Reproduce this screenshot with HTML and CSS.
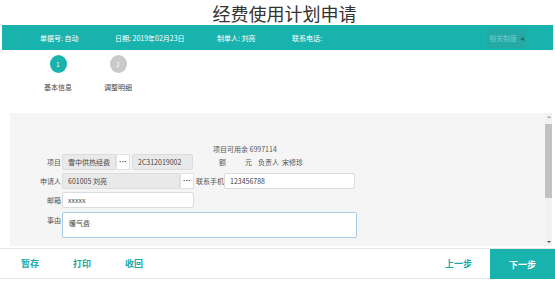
FILE: index.html
```html
<!DOCTYPE html>
<html lang="zh-CN">
  <head>
    <meta charset="UTF-8" />
    <title>经费使用计划申请</title>
    <link rel="stylesheet" href="styles.css">
  </head>
  <body>
    <h1 class="title">经费使用计划申请</h1>

    <div class="head-bar">
      <span class="head-item w1">单据号: 自动</span>
      <span class="head-item w2">日期: 2019年02月23日</span>
      <span class="head-item w3">制单人: 刘亮</span>
      <span class="head-item">联系电话:</span>
      <span class="rules-btn">相关制度 <span class="arrow">&#9666;</span></span>
    </div>

    <div class="steps">
      <div class="step active">
        <span class="dot">1</span>
        <span class="step-label">基本信息</span>
      </div>
      <div class="step">
        <span class="dot">2</span>
        <span class="step-label">调整明细</span>
      </div>
    </div>

    <div class="panel">
      <div class="panel-body">
        <div class="row row-top">
          <div class="field">
            <label class="lbl">项目</label>
            <input type="text" class="inp gray w-proj" value="雪中供热经费" readonly />
            <button class="dots">&middot;&middot;&middot;</button>
            <input type="text" class="inp gray w-code" value="2C312019002" readonly />
          </div>
          <div class="info">
            <div>项目可用余 6997114</div>
            <div class="info-line">
              <span class="i-e">额</span><span class="i-y">元</span><span class="i-f">负责人</span><span>宋修珍</span>
            </div>
          </div>
        </div>

        <div class="row">
          <div class="field">
            <label class="lbl">申请人</label>
            <input type="text" class="inp gray w-user" value="601005 刘亮" readonly />
            <button class="dots">&middot;&middot;&middot;</button>
          </div>
          <label class="lbl-phone">联系手机</label>
          <input type="text" class="inp w-phone" value="123456788" />
        </div>

        <div class="row">
          <div class="field">
            <label class="lbl">邮箱</label>
            <input type="text" class="inp w-mail" value="xxxxx" />
          </div>
        </div>

        <div class="row row-area">
          <label class="lbl">事由</label>
          <textarea class="area">暖气费</textarea>
        </div>
      </div>

      <div class="scrollbar">
        <span class="sb-up"></span>
        <span class="sb-thumb"></span>
        <span class="sb-down"></span>
      </div>
    </div>

    <div class="foot">
      <a class="foot-link">暂存</a>
      <a class="foot-link">打印</a>
      <a class="foot-link">收回</a>
      <a class="foot-link prev">上一步</a>
      <a class="next-btn">下一步</a>
    </div>
  </body>
</html>
```

FILE: styles.css
```css
body {
  margin: 0;
  width: 555px;
  height: 281px;
  overflow: hidden;
  background: #fff;
  font-family: "Noto Sans CJK SC", "DejaVu Sans", sans-serif;
  color: #555;
}
.title {
  margin: 0;
  height: 25px;
  line-height: 26px;
  text-align: center;
  font-size: 18px;
  font-weight: 400;
  color: #333;
  padding-left: 14px;
}
.head-bar {
  margin: 0 2px;
  height: 25px;
  background-color: #19b3ae;
  display: flex;
  align-items: center;
  padding-left: 38px;
  color: #fff;
  font-size: 7px;
}
.head-item.w1 {
  width: 75px;
}
.head-item.w2 {
  width: 102px;
}
.head-item.w3 {
  width: 75px;
}
.rules-btn {
  margin-left: auto;
  margin-right: 27px;
  width: 39px;
  height: 20px;
  background-color: #23aaa5;
  color: #7cc9c5;
  font-size: 7px;
  display: flex;
  align-items: center;
  justify-content: center;
  gap: 3px;
}
.rules-btn .arrow {
  color: #2a6f6c;
  font-size: 8px;
}
.steps {
  height: 63px;
  display: flex;
  padding-left: 44px;
  padding-top: 5px;
  box-sizing: border-box;
  gap: 32px;
}
.step {
  width: 28px;
  display: flex;
  flex-direction: column;
  align-items: center;
}
.dot {
  width: 17px;
  height: 18px;
  border-radius: 50%;
  background-color: #c9c9c9;
  color: #fff;
  font-size: 6px;
  display: flex;
  align-items: center;
  justify-content: center;
}
.step.active .dot {
  background-color: #19b3ae;
}
.step-label {
  margin-top: 9px;
  font-size: 7px;
  color: #444;
  white-space: nowrap;
}
.panel {
  margin-left: 10px;
  width: 542px;
  height: 133px;
  display: flex;
  background-color: #f5f5f5;
}
.panel-body {
  flex: 1;
  padding-top: 30px;
  display: flex;
  flex-direction: column;
  gap: 3px;
}
.row {
  display: flex;
  align-items: center;
}
.row-top {
  align-items: flex-end;
}
.field {
  display: flex;
  align-items: center;
}
.lbl {
  width: 52px;
  padding-right: 1px;
  box-sizing: border-box;
  text-align: right;
  font-size: 7px;
  color: #555;
}
.inp {
  height: 16px;
  box-sizing: border-box;
  border: 1px solid #dcdcdc;
  border-radius: 2px;
  background: #fff;
  font-family: inherit;
  font-size: 7px;
  color: #444;
  padding: 0 5px;
  outline: none;
}
.inp.gray {
  background-color: #e9e9e9;
}
.w-proj {
  width: 54px;
}
.w-code {
  width: 61px;
  margin-left: 2px;
}
.w-user {
  width: 118px;
}
.w-mail {
  width: 132px;
}
.w-phone {
  width: 131px;
}
.dots {
  width: 14px;
  height: 16px;
  padding: 0;
  border: 1px solid #e2e2e2;
  background: #fff;
  font-size: 8px;
  font-weight: bold;
  color: #444;
  line-height: 14px;
}
.info {
  margin-left: 20px;
  margin-bottom: 1px;
  font-size: 7px;
  color: #555;
  line-height: 13px;
}
.info-line span {
  display: inline-block;
}
.i-e {
  margin-left: 6px;
  width: 26px;
}
.i-y {
  width: 13px;
}
.i-f {
  width: 24px;
}
.lbl-phone {
  width: 28px;
  margin-left: 2px;
  font-size: 7px;
  color: #555;
}
.row-area {
  align-items: flex-start;
  margin-top: 1px;
}
.row-area .lbl {
  padding-top: 3px;
}
.area {
  width: 295px;
  height: 26px;
  box-sizing: border-box;
  border: 1px solid #a8cde6;
  border-radius: 2px;
  background: #fff;
  font-family: inherit;
  font-size: 7px;
  color: #444;
  padding: 5px 6px;
  resize: none;
  outline: none;
}
.scrollbar {
  width: 7px;
  background-color: #f1f1f1;
  display: flex;
  flex-direction: column;
  align-items: center;
}
.sb-up,
.sb-down {
  width: 0;
  height: 0;
  border-left: 2px solid transparent;
  border-right: 2px solid transparent;
  margin: 3px 0;
}
.sb-up {
  border-bottom: 2px solid #a3a3a3;
}
.sb-down {
  margin-top: auto;
  border-top: 2px solid #505050;
}
.sb-thumb {
  width: 7px;
  height: 74px;
  margin-top: 3px;
  background-color: #c1c1c1;
}
.foot {
  margin-top: 2px;
  height: 31px;
  display: flex;
  align-items: stretch;
  border-top: 1px solid #e6e6e6;
  border-bottom: 1px solid #e6e6e6;
  box-sizing: border-box;
  padding-left: 21px;
}
.foot-link {
  width: 52px;
  display: flex;
  align-items: center;
  font-size: 9px;
  font-weight: bold;
  color: #1aa9a4;
}
.foot-link.prev {
  margin-left: auto;
  width: 45px;
}
.next-btn {
  width: 65px;
  margin-bottom: -1px;
  background-color: #19b3ae;
  color: #fff;
  font-size: 9px;
  font-weight: bold;
  display: flex;
  align-items: center;
  justify-content: center;
}
```
